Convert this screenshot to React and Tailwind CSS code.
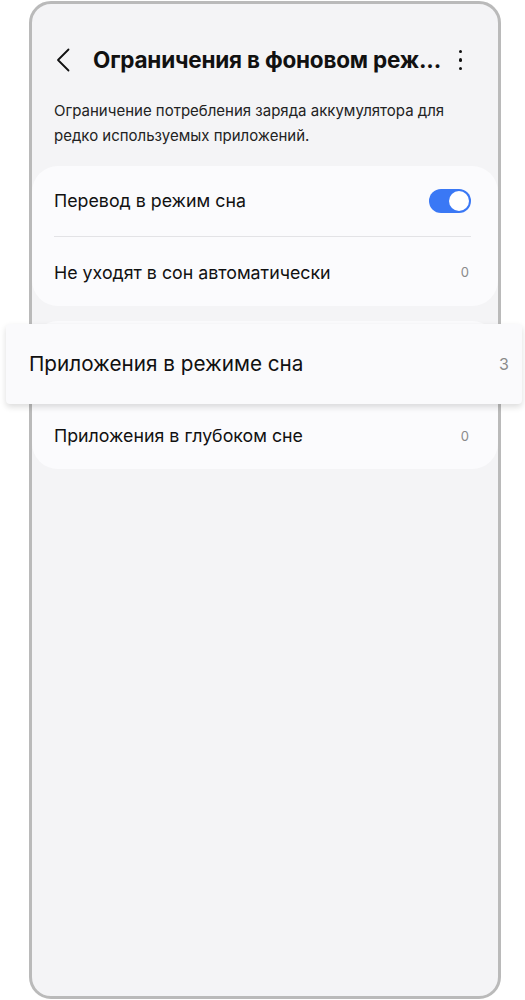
import React from 'react';

const font = { fontFamily: 'Inter, "Noto Sans", sans-serif' };

const Toggle = () => (
  <div className="w-[42px] h-[24px] rounded-full bg-[#3a78f5] flex items-center justify-end p-[2px]">
    <div className="w-[20px] h-[20px] rounded-full bg-white" />
  </div>
);

const Row = ({ label, count, children }) => (
  <div className="flex items-center justify-between h-full">
    <span className="text-[17.8px] text-[#111]">{label}</span>
    {children || <span className="text-[13px] text-[#8a8a8a] pr-[2px]">{count}</span>}
  </div>
);

export default function App() {
  return (
    <div className="w-[525px] h-[1000px] bg-white overflow-hidden" style={font}>
      <div className="ml-[29px] mt-[1px] w-[472px] h-[998px] border-[3px] border-[#bababa] rounded-[22px] bg-[#f4f4f6]">
        {/* Header */}
        <div className="mt-[30px] h-[52px] flex items-center pl-[24px] pr-[36px]">
          <svg width="14" height="24" viewBox="0 0 14 24" fill="none" className="shrink-0">
            <path d="M12.5 1.5 L2 12 L12.5 22.5" stroke="#111" strokeWidth="1.8" strokeLinecap="round" strokeLinejoin="round" />
          </svg>
          <h1 className="ml-[23px] text-[22.5px] font-bold text-[#111] tracking-[-0.2px] flex-1 whitespace-nowrap">
            Ограничения в фоновом реж...
          </h1>
          <div className="flex flex-col gap-[5px] items-center">
            <span className="w-[3.5px] h-[3.5px] rounded-full bg-[#111]" />
            <span className="w-[3.5px] h-[3.5px] rounded-full bg-[#111]" />
            <span className="w-[3.5px] h-[3.5px] rounded-full bg-[#111]" />
          </div>
        </div>

        {/* Description */}
        <p className="mt-[12px] pl-[22px] pr-[20px] text-[15px] leading-[25px] text-[#222]">
          Ограничение потребления заряда аккумулятора для редко используемых приложений.
        </p>

        {/* Card 1 */}
        <div className="mt-[18px] rounded-[26px] bg-[#fbfbfd] pl-[22px] pr-[27px]">
          <div className="h-[71px] border-b border-[#e3e3e6]">
            <Row label="Перевод в режим сна">
              <Toggle />
            </Row>
          </div>
          <div className="h-[69px] pt-[3px]">
            <Row label="Не уходят в сон автоматически" count="0" />
          </div>
        </div>

        {/* Card 2 */}
        <div className="mt-[15px] rounded-[26px] bg-[#fbfbfd]">
          <div className="pt-[3px]">
            <div className="ml-[-26px] mr-[-24px] h-[80px] rounded-[4px] bg-[#fafafc] shadow-[0_3px_6px_rgba(0,0,0,0.14)] flex items-center justify-between pl-[23px] pr-[13px]">
              <span className="text-[20.7px] text-[#111]">Приложения в режиме сна</span>
              <span className="text-[16px] text-[#8a8a8a]">3</span>
            </div>
          </div>
          <div className="h-[65px] pl-[22px] pr-[27px]">
            <Row label="Приложения в глубоком сне" count="0" />
          </div>
        </div>
      </div>
    </div>
  );
}
